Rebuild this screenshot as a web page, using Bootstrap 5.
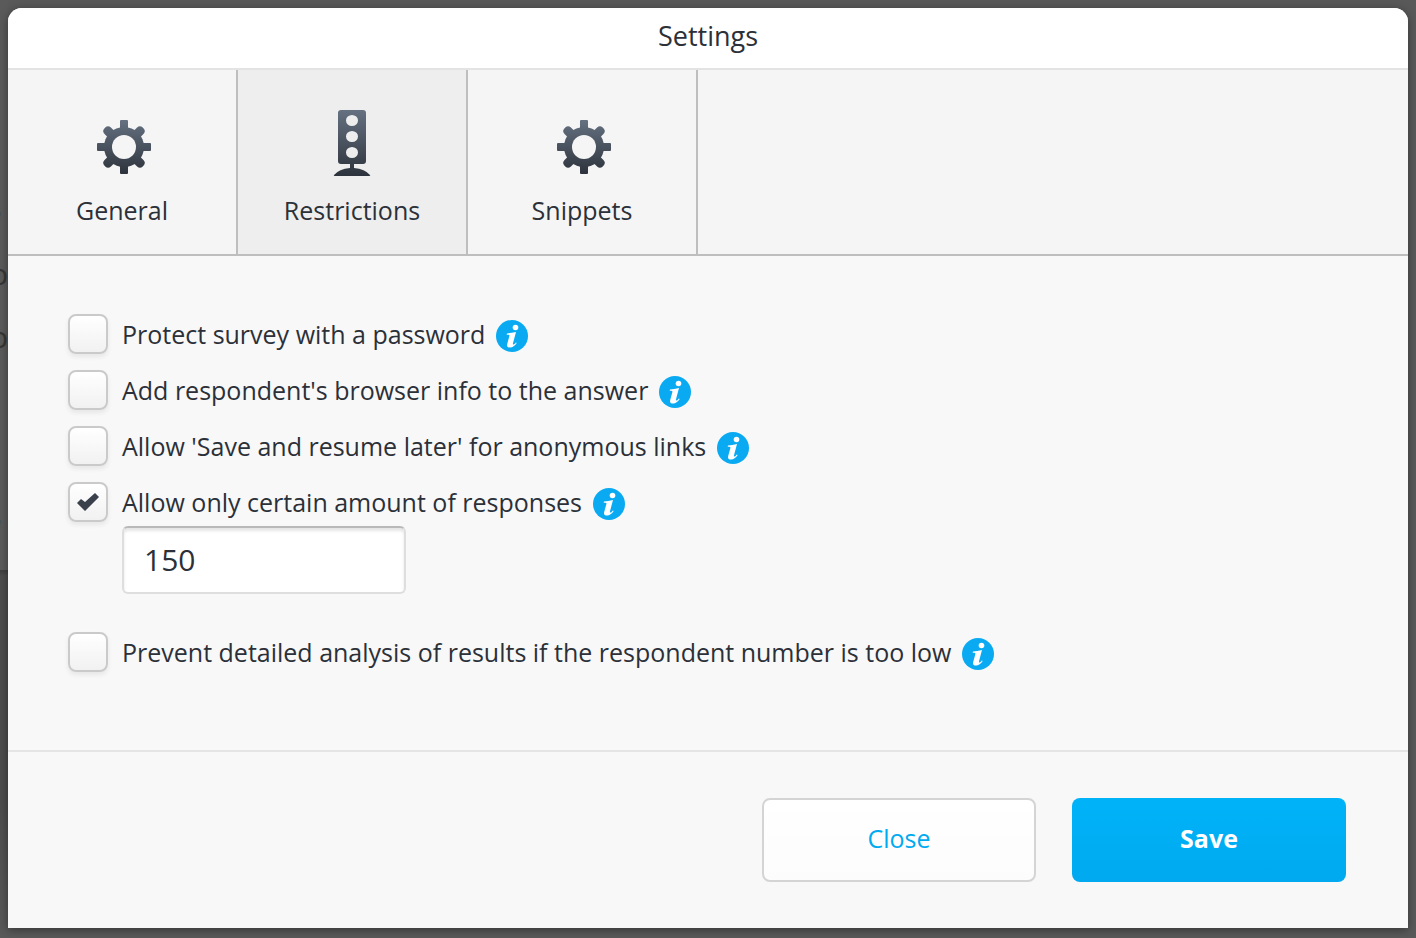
<!DOCTYPE html>
<html lang="en">
<head>
<meta charset="utf-8">
<meta name="viewport" content="width=device-width, initial-scale=1">
<title>Settings</title>
<link href="https://cdn.jsdelivr.net/npm/bootstrap@5.3.0/dist/css/bootstrap.min.css" rel="stylesheet">
<style>
  body { background: #595959; color: #2c3038; font-family: "Open Sans", "Noto Sans", sans-serif; font-size: 25px; line-height: 32px; }
  .page-behind { position: absolute; inset: 0 auto 0 0; width: 8px; overflow: hidden; background: linear-gradient(#5a5a5a 570px, #3f3f3f 570px, #4d4d4d 576px, #4d4d4d 800px, #595959); color: #363636; font-size: 30px; }
  .page-behind span { position: absolute; right: 0; }
  .page-behind .hint { right: 6px; color: #37444d; }
  .settings-dialog { position: relative; min-height: calc(100vh - 18px); margin: 8px 8px 10px; border: 0; border-radius: 14px 14px 0 0; background: #f8f8f8; color: inherit; box-shadow: 0 2px 10px rgba(0,0,0,.4); overflow: hidden; }
  .settings-head { background: #fff; border-bottom: 2px solid #e3e3e3; padding: 12px 16px 16px; }
  .settings-head h1 { font-size: 27px; font-weight: 400; line-height: 32px; }
  .settings-tabs { background: #f5f5f5; border-bottom: 2px solid #bebebe; }
  .settings-tabs .nav-link { width: 230px; height: 184px; margin: 0; padding: 8px 0 0; color: inherit; border: 0; border-right: 2px solid #bebebe; border-radius: 0; background: transparent; }
  .settings-tabs .nav-link.active { background: #eee; color: inherit; border-color: #bebebe; }
  .settings-tabs svg { display: block; margin: 0 auto 18px; }
  .settings-body { padding: 50px 60px 70px; }
  .option { min-height: 56px; gap: 14px; margin: 0; padding: 0; }
  .option .form-check-input { flex: none; float: none; width: 40px; height: 40px; margin: 0; border: 2px solid #cacaca; border-radius: 8px; background: linear-gradient(#fff, #f1f1f1); box-shadow: 0 3px 5px rgba(0,0,0,.07); }
  .option .form-check-input:checked { background: url("data:image/svg+xml,%3Csvg xmlns='http://www.w3.org/2000/svg' viewBox='0 0 36 36'%3E%3Cpath fill='%233a414c' d='m7 19 4-4 4 3L25 9l4 4-14 14z'/%3E%3C/svg%3E") center / 36px no-repeat, linear-gradient(#fff, #f1f1f1); }
  .info-btn { flex: none; width: 32px; height: 32px; margin: 4px 0 0 -3px; padding: 0; border: 0; border-radius: 50%; background: none; line-height: 0; }
  .amount { width: 284px; height: 68px; margin: -4px 0 30px 54px; padding: 0 20px 2px; font-size: 30px; color: #2c3038; border: 2px solid #dedede; border-top-color: #b9b9b9; border-radius: 6px; box-shadow: inset 0 3px 3px rgba(0,0,0,.1); }
  .settings-foot { gap: 36px; padding: 46px 62px; border-top: 2px solid #e5e5e5; }
  .action-btn { width: 274px; height: 84px; margin: 0; padding: 0 12px 3px; font-size: 25px; border: 2px solid #d4d4d4; border-radius: 8px; }
  .close-btn, .close-btn:hover { color: #00aaf0; background: linear-gradient(#fff, #fcfcfc); border-color: #d4d4d4; }
  .save-btn, .save-btn:hover { color: #fff; font-weight: 700; background: linear-gradient(#00b3f8, #00a9f0) border-box; border-color: transparent; }
</style>
</head>
<body>
<div class="page-behind" aria-hidden="true">
  <span class="hint" style="top:194px">5</span><span style="top:258px">p</span><span style="top:321px">p</span><span class="hint" style="top:502px">5</span>
</div>
<svg width="0" height="0" class="position-absolute" aria-hidden="true">
  <defs>
    <linearGradient id="steel" x1="0" y1="0" x2="0" y2="1"><stop stop-color="#657181"/><stop offset="1" stop-color="#2d333c"/></linearGradient>
    <mask id="gear-shape" maskUnits="userSpaceOnUse" x="0" y="0" width="54" height="54">
      <g fill="#fff">
        <circle cx="27" cy="27" r="20"/>
        <rect x="23" y="0" width="8" height="54" rx="1"/>
        <rect x="0" y="23" width="54" height="8" rx="1"/>
        <rect x="22.500" y="0" width="9" height="54" rx="4" transform="rotate(45 27 27)"/>
        <rect x="22.500" y="0" width="9" height="54" rx="4" transform="rotate(-45 27 27)"/>
      </g>
      <circle cx="27" cy="27" r="12" fill="#000"/>
    </mask>
    <symbol id="gear" viewBox="0 0 54 54">
      <rect width="54" height="54" fill="url(#steel)" mask="url(#gear-shape)"/>
    </symbol>
    <symbol id="info" viewBox="0 0 32 32">
      <circle cx="16" cy="16" r="16" fill="#0aaaf2"/>
      <circle cx="19.5" cy="7.5" r="2.8" fill="#fff"/>
      <path fill="#fff" d="M11 13.500q4-.5 9-1.500l-3 11.200q-.4 1.600.6 1.300.8-.2 2.300-2l.8.6q-3 4.400-6.500 4.400-4 0-3-3.600l2.200-7.800q.3-1.300-.8-1.400h-1.900z"/>
    </symbol>
  </defs>
</svg>

<main class="modal-content settings-dialog w-auto d-flex flex-column">
  <header class="settings-head text-center"><h1 class="modal-title">Settings</h1></header>
  <nav class="nav nav-tabs settings-tabs" role="tablist">
    <button class="nav-link" type="button" role="tab" aria-selected="false"><svg width="58" height="70" viewBox="-4 -14 58 70"><use href="#gear" width="54" height="54"/></svg>General</button>
    <button class="nav-link active" type="button" role="tab" aria-selected="true"><svg width="54" height="70" viewBox="0 -1 54 70"><path fill="url(#steel)" fill-rule="evenodd" d="M16 3h22q3 0 3 3v48q0 3-3 3h-9v4q11 1 16 7 1 1-1 1H10q-2 0-1-1 5-6 16-7v-4h-9q-3 0-3-3V6q0-3 3-3zM27 8a6 5.500 0 1 0 0 11 6 5.500 0 0 0 0-11zm0 16a6 5.500 0 1 0 0 11 6 5.500 0 0 0 0-11zm0 16a6 5.500 0 1 0 0 11 6 5.500 0 0 0 0-11z"/></svg>Restrictions</button>
    <button class="nav-link" type="button" role="tab" aria-selected="false"><svg width="58" height="70" viewBox="-4 -14 58 70"><use href="#gear" width="54" height="54"/></svg>Snippets</button>
  </nav>
  <form class="d-flex flex-column flex-grow-1">
    <div class="settings-body flex-grow-1">
      <div class="form-check option d-flex align-items-center"><input class="form-check-input" type="checkbox" id="password"><label for="password">Protect survey with a password</label><button class="info-btn" type="button" aria-label="More information"><svg width="32" height="32"><use href="#info"/></svg></button></div>
      <div class="form-check option d-flex align-items-center"><input class="form-check-input" type="checkbox" id="browser"><label for="browser">Add respondent's browser info to the answer</label><button class="info-btn" type="button" aria-label="More information"><svg width="32" height="32"><use href="#info"/></svg></button></div>
      <div class="form-check option d-flex align-items-center"><input class="form-check-input" type="checkbox" id="resume"><label for="resume">Allow 'Save and resume later' for anonymous links</label><button class="info-btn" type="button" aria-label="More information"><svg width="32" height="32"><use href="#info"/></svg></button></div>
      <div class="form-check option d-flex align-items-center"><input class="form-check-input" type="checkbox" id="limit" checked><label for="limit">Allow only certain amount of responses</label><button class="info-btn" type="button" aria-label="More information"><svg width="32" height="32"><use href="#info"/></svg></button></div>
      <input class="form-control amount" type="text" value="150" aria-label="Amount of responses">
      <div class="form-check option d-flex align-items-center"><input class="form-check-input" type="checkbox" id="analysis"><label for="analysis">Prevent detailed analysis of results if the respondent number is too low</label><button class="info-btn" type="button" aria-label="More information"><svg width="32" height="32"><use href="#info"/></svg></button></div>
    </div>
    <footer class="settings-foot d-flex justify-content-end">
      <button class="btn action-btn close-btn" type="button">Close</button>
      <button class="btn action-btn save-btn" type="submit">Save</button>
    </footer>
  </form>
</main>
<script src="https://cdn.jsdelivr.net/npm/bootstrap@5.3.0/dist/js/bootstrap.bundle.min.js"></script>
</body>
</html>
